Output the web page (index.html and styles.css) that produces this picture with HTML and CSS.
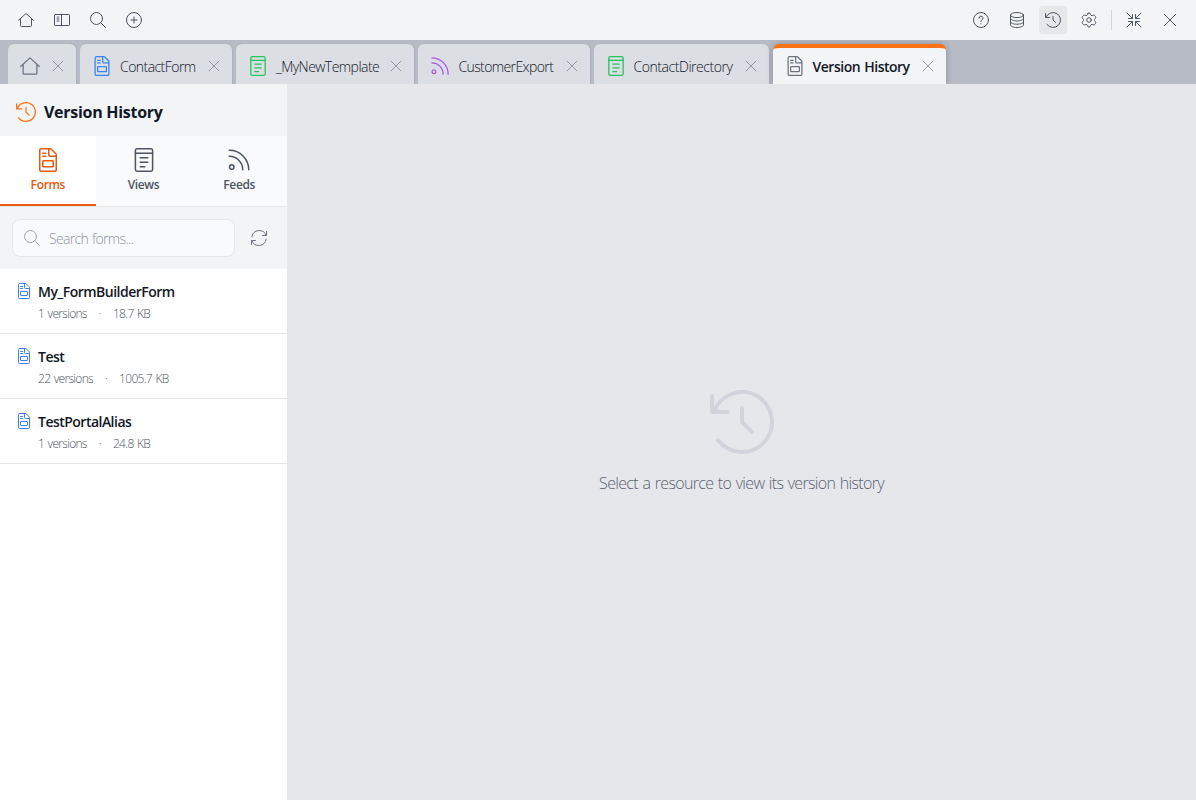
FILE: index.html
```html
<!DOCTYPE html>
<html lang="en">
<head>
    <meta charset="UTF-8">
    <meta name="viewport" content="width=device-width, initial-scale=1.0">
    <title>Version History</title>
    <link rel="stylesheet" href="styles.css">
</head>
<body>
<svg class="sprite" width="0" height="0">
    <symbol id="home" viewBox="0 0 24 24"><path d="M.75 12.5 12 2.25 23.25 12.5M3.75 10.5v9.75a1.5 1.5 0 0 0 1.5 1.5h13.5a1.5 1.5 0 0 0 1.5-1.5V10.5"/></symbol>
    <symbol id="close" viewBox="0 0 24 24"><path d="M3.5 3.5l17 17M20.5 3.5l-17 17"/></symbol>
    <symbol id="search" viewBox="0 0 24 24"><circle cx="9.75" cy="9.75" r="9"/><path d="M16.2 16.2l7.05 7.05"/></symbol>
    <symbol id="history" viewBox="0 0 24 24"><path d="M12 6.75V12l3.75 3.75M.75 2.25v6h6M1.39 8.25A11.25 11.25 0 1 1 3 18.75"/></symbol>
    <symbol id="form" viewBox="0 0 24 24"><path d="M5.25.75h9a1.5 1.5 0 0 1 1.06.44l4.5 4.5a1.5 1.5 0 0 1 .44 1.06v15a1.5 1.5 0 0 1-1.5 1.5H5.25a1.5 1.5 0 0 1-1.5-1.5V2.25a1.5 1.5 0 0 1 1.5-1.5zM12.75.75v6a1.5 1.5 0 0 0 1.5 1.5h6M6.75 5.25h3M6.75 8.25h3"/><rect x="6.75" y="12.75" width="10.5" height="6" rx=".75"/></symbol>
    <symbol id="view" viewBox="0 0 24 24"><rect x="3.4" y=".75" width="17.2" height="22.5" rx="1.7"/><path d="M3.4 5.25h17.2M8.25 9.75h7.5M8.25 14.25h7.5M8.25 18.75h4.5"/></symbol>
    <symbol id="feed" viewBox="0 0 24 24"><circle cx="4.75" cy="19" r="2.25"/><path d="M2.25 2.25a19.5 19.5 0 0 1 19.5 19.5M2.25 8.25a13.5 13.5 0 0 1 13.5 13.5"/></symbol>
</svg>

<div class="app">
    <header class="toolbar">
        <div class="tools">
            <button class="tool"><svg><use href="#home"/></svg></button>
            <button class="tool"><svg viewBox="0 0 24 24"><rect x=".75" y="3.75" width="22.5" height="16.5" rx="1.5"/><path d="M11.25 3.75v16.5"/><path class="bar" d="M6 6.5v8.5"/></svg></button>
            <button class="tool"><svg><use href="#search"/></svg></button>
            <button class="tool"><svg viewBox="0 0 24 24"><circle cx="12" cy="12" r="11.25"/><path d="M12 7.5v9M7.5 12h9"/></svg></button>
        </div>
        <div class="tools">
            <button class="tool"><svg viewBox="0 0 24 24"><circle cx="12" cy="12" r="11.25"/><path d="M9 9.2a3 3 0 1 1 4.2 2.75A2 2 0 0 0 12 13.8v.7M12 17.6v.4"/></svg></button>
            <button class="tool"><svg viewBox="0 0 24 24"><ellipse cx="12" cy="4.6" rx="9.75" ry="3.85"/><path d="M2.25 4.6v14.8c0 2.1 4.4 3.85 9.75 3.85s9.75-1.75 9.75-3.85V4.6M2.25 9.6c0 2.1 4.4 3.85 9.75 3.85s9.75-1.75 9.75-3.85M2.25 14.5c0 2.1 4.4 3.85 9.75 3.85s9.75-1.75 9.75-3.85"/></svg></button>
            <button class="tool on"><svg><use href="#history"/></svg></button>
            <button class="tool"><svg viewBox="0 0 24 24"><circle cx="12" cy="12" r="3.4"/><path d="M10.5 2 9.9 3.8A2.2 2.2 0 0 1 7.3 5.2L5.2 4.8A2.1 2.1 0 0 0 2.9 5.8L2.2 7A2.1 2.1 0 0 0 2.4 9.5L3.7 11A2.2 2.2 0 0 1 3.7 13L2.4 14.5A2.1 2.1 0 0 0 2.2 17L2.9 18.2A2.1 2.1 0 0 0 5.2 19.2L7.3 18.8A2.2 2.2 0 0 1 9.9 20.2L10.5 22A2.1 2.1 0 0 0 13.5 22L14.1 20.2A2.2 2.2 0 0 1 16.7 18.8L18.8 19.2A2.1 2.1 0 0 0 21.1 18.2L21.8 17A2.1 2.1 0 0 0 21.6 14.5L20.3 13A2.2 2.2 0 0 1 20.3 11L21.6 9.5A2.1 2.1 0 0 0 21.8 7L21.1 5.8A2.1 2.1 0 0 0 18.8 4.8L16.7 5.2A2.2 2.2 0 0 1 14.1 3.8L13.5 2A2.1 2.1 0 0 0 10.5 2z"/></svg></button>
            <span class="divider"></span>
            <button class="tool"><svg viewBox="0 0 24 24"><path d="M1.5 1.5l8 8M9.75 3.75v6h-6M22.5 1.5l-8 8M14.25 3.75v6h6M1.5 22.5l8-8M9.75 20.25v-6h-6M22.5 22.5l-8-8M14.25 20.25v-6h6"/></svg></button>
            <button class="tool"><svg><use href="#close"/></svg></button>
        </div>
    </header>

    <nav class="tabs">
        <div class="tab home"><svg class="icon"><use href="#home"/></svg><svg class="x"><use href="#close"/></svg></div>
        <div class="tab contact"><svg class="icon blue"><use href="#form"/></svg><span>ContactForm</span><svg class="x"><use href="#close"/></svg></div>
        <div class="tab template"><svg class="icon green"><use href="#view"/></svg><span>_MyNewTemplate</span><svg class="x"><use href="#close"/></svg></div>
        <div class="tab export"><svg class="icon purple"><use href="#feed"/></svg><span>CustomerExport</span><svg class="x"><use href="#close"/></svg></div>
        <div class="tab directory"><svg class="icon green"><use href="#view"/></svg><span>ContactDirectory</span><svg class="x"><use href="#close"/></svg></div>
        <div class="tab active"><svg class="icon"><use href="#form"/></svg><span>Version History</span><svg class="x"><use href="#close"/></svg></div>
    </nav>

    <div class="content">
        <aside class="sidebar">
            <div class="title"><svg><use href="#history"/></svg><h1>Version History</h1></div>
            <div class="types">
                <div class="type selected"><svg><use href="#form"/></svg><span>Forms</span></div>
                <div class="type"><svg><use href="#view"/></svg><span>Views</span></div>
                <div class="type"><svg><use href="#feed"/></svg><span>Feeds</span></div>
            </div>
            <div class="filter">
                <label class="search"><svg><use href="#search"/></svg><input type="text" placeholder="Search forms..."></label>
                <button class="refresh"><svg viewBox="0 0 24 24"><path d="M23.25 2.25v6h-6M.75 21.75v-6h6M22.8 8.25A11.2 11.2 0 0 0 1.2 10.2M1.2 15.75a11.2 11.2 0 0 0 21.6-1.95"/></svg></button>
            </div>
            <div class="list">
                <div class="item">
                    <svg><use href="#form"/></svg>
                    <div><h2>My_FormBuilderForm</h2><p><span>1 versions</span><span>·</span><span>18.7 KB</span></p></div>
                </div>
                <div class="item">
                    <svg><use href="#form"/></svg>
                    <div><h2>Test</h2><p><span>22 versions</span><span>·</span><span>1005.7 KB</span></p></div>
                </div>
                <div class="item">
                    <svg><use href="#form"/></svg>
                    <div><h2>TestPortalAlias</h2><p><span>1 versions</span><span>·</span><span>24.8 KB</span></p></div>
                </div>
            </div>
        </aside>
        <main class="empty">
            <svg><use href="#history"/></svg>
            <p>Select a resource to view its version history</p>
        </main>
    </div>
</div>
</body>
</html>
```
FILE: styles.css
```css
*{
    margin: 0;
    padding: 0;
    box-sizing: border-box;
}

body{
    font-family: "Open Sans", "Noto Sans", sans-serif;
    font-weight: 300;
    color: #111827;
    overflow: hidden;
}

svg {
    display: block;
    flex-shrink: 0;
    fill: none;
    stroke: currentColor;
    stroke-width: 1.5;
    stroke-linecap: round;
    stroke-linejoin: round;
}
.sprite {
    position: absolute;
}

button {
    border: none;
    background: none;
}

.app {
    display: flex;
    flex-direction: column;
    height: 100vh;
}

/* top toolbar */
.toolbar {
    height: 40px;
    padding: 0 12px;
    display: flex;
    align-items: center;
    justify-content: space-between;
    background: #f3f4f6;
}
.tools {
    display: flex;
    align-items: center;
    gap: 8px;
}
.tool {
    width: 28px;
    height: 28px;
    display: flex;
    align-items: center;
    justify-content: center;
    border-radius: 4px;
    color: #4b5563;
}
.tool svg {
    width: 16px;
    height: 16px;
}
.tool .bar {
    stroke-width: 4;
    stroke-linecap: butt;
    opacity: 0.5;
}
.tool.on {
    background: #e5e7eb;
}
.divider {
    width: 1px;
    height: 20px;
    background: #d1d5db;
}

/* open tabs */
.tabs {
    height: 44px;
    padding: 4px 8px 0;
    display: flex;
    gap: 4px;
    background: #b7bbc5;
}
.tab {
    height: 40px;
    padding: 4px 10px 0 12px;
    display: flex;
    align-items: center;
    background: #dbdee3;
    border-radius: 6px 6px 0 0;
    box-shadow: 1px 0 2px rgba(0, 0, 0, 0.06);
    font-size: 14px;
    letter-spacing: -0.55px;
    white-space: nowrap;
    color: #111827;
}
.tab span {
    padding-top: 1px;
}
.tab .icon {
    width: 20px;
    height: 20px;
    margin-right: 8px;
    color: #6b7280;
}
.tab .x {
    width: 14px;
    height: 14px;
    margin-left: auto;
    margin-right: 1px;
    stroke-width: 1.3;
    color: #7d838f;
}
.tab .blue { color: #3b82f6; }
.tab .green { color: #22c55e; }
.tab .purple { color: #a855f7; }
.tab.home { width: 68px; }
.tab.contact { width: 152px; }
.tab.template { width: 178.4px; }
.tab.export { width: 171.2px; }
.tab.directory { width: 175px; }
.tab.export span { letter-spacing: -0.6px; }
.tab.directory span { letter-spacing: -0.46px; }
.tab.active {
    width: 173px;
    padding-top: 0;
    background: #f3f4f6;
    border-top: 4px solid #f97316;
    font-weight: 600;
    letter-spacing: -0.5px;
    word-spacing: 1px;
    box-shadow: 0 0 6px rgba(0, 0, 0, 0.25);
    clip-path: inset(-4px -6px 0 -6px);
}

.content {
    flex: 1;
    display: flex;
}

/* sidebar */
.sidebar {
    width: 287px;
    background: #fff;
}
.title {
    height: 52px;
    padding: 4px 16px 0;
    display: flex;
    align-items: center;
    gap: 8px;
    background: #f3f4f6;
    color: #f97316;
}
.title svg {
    width: 20px;
    height: 20px;
}
.title h1 {
    font-size: 16px;
    font-weight: 700;
    letter-spacing: -0.28px;
    color: #111827;
}
.types {
    height: 71px;
    display: flex;
    background: #f9fafb;
    border-bottom: 1px solid #e5e7eb;
}
.type {
    flex: 1;
    padding-top: 12px;
    display: flex;
    flex-direction: column;
    align-items: center;
    gap: 4px;
    font-size: 12px;
    line-height: 18px;
    font-weight: 600;
    letter-spacing: -0.35px;
    color: #4b5563;
    border-bottom: 2px solid transparent;
}
.type svg {
    width: 24px;
    height: 24px;
}
.type.selected {
    background: #fff;
    border-color: #ea580c;
    color: #ea580c;
}
.filter {
    height: 62px;
    padding: 12px;
    display: flex;
    gap: 8px;
    background: #f3f4f6;
}
.search {
    width: 223px;
    padding: 0 11px;
    display: flex;
    align-items: center;
    gap: 9px;
    background: #f9fafb;
    border: 1px solid #e5e7eb;
    border-radius: 8px;
    color: #9ca3af;
}
.search svg {
    width: 16px;
    height: 16px;
}
.search input {
    flex: 1;
    min-width: 0;
    padding-top: 1px;
    border: none;
    outline: none;
    background: none;
    font: inherit;
    font-size: 14px;
    letter-spacing: -0.68px;
    word-spacing: 1px;
}
.search input::placeholder {
    color: #8d95a3;
}
.refresh {
    width: 32px;
    display: flex;
    align-items: center;
    justify-content: center;
    color: #6b7280;
}
.refresh svg {
    width: 16px;
    height: 16px;
}

.item {
    height: 65px;
    padding: 13px 16px 0;
    display: flex;
    gap: 6px;
    border-bottom: 1px solid #e5e7eb;
}
.item svg {
    width: 16px;
    height: 16px;
    margin-top: 1px;
    color: #3b82f6;
}
.item h2 {
    font-size: 14px;
    line-height: 20px;
    font-weight: 600;
    letter-spacing: -0.52px;
}
.item p {
    margin-top: 4px;
    display: flex;
    gap: 12px;
    font-size: 12px;
    line-height: 16px;
    letter-spacing: -0.7px;
    word-spacing: 1px;
    color: #4b5563;
}

/* nothing selected */
.empty {
    flex: 1;
    padding-top: 306px;
    display: flex;
    flex-direction: column;
    align-items: center;
    background: #e5e7eb;
    color: #5b6472;
}
.empty svg {
    width: 64px;
    height: 64px;
    color: #d1d5db;
}
.empty p {
    margin-top: 17px;
    font-size: 16px;
    line-height: 24px;
    letter-spacing: -0.67px;
    word-spacing: 1px;
}
```
